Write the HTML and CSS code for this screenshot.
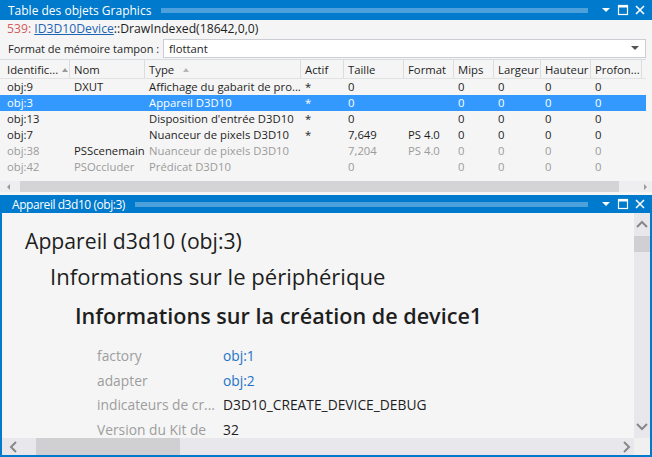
FILE: index.html
```html
<!DOCTYPE html>
<html lang="fr">
<head>
<meta charset="utf-8">
<title>Table des objets Graphics</title>
<link rel="stylesheet" href="styles.css">
</head>
<body>
<div class="app">
  <section class="pane pane-top">
    <header class="titlebar">
      <span class="title">Table des objets Graphics</span>
      <span class="grip"></span>
      <span class="tb-icons">
        <svg class="ic" width="12" height="12" viewBox="0 0 12 12"><polygon points="2,4 10,4 6,8" fill="#fff"/></svg>
        <svg class="ic" width="12" height="12" viewBox="0 0 12 12"><rect x="1.5" y="1.5" width="9" height="9" fill="none" stroke="#fff" stroke-width="1.2"/><rect x="1.5" y="1.5" width="9" height="2" fill="#fff"/></svg>
        <svg class="ic" width="12" height="12" viewBox="0 0 12 12"><path d="M2 2 L10 10 M10 2 L2 10" stroke="#fff" stroke-width="1.6"/></svg>
      </span>
    </header>
    <div class="callrow"><span class="evt">539:</span> <a class="link" href="#">ID3D10Device</a>::DrawIndexed(18642,0,0)</div>
    <div class="formatrow">
      <span class="flabel">Format de mémoire tampon :</span>
      <div class="select"><span>flottant</span><svg width="10" height="6" viewBox="0 0 10 6"><polygon points="1,1 9,1 5,5" fill="#555"/></svg></div>
    </div>
    <div class="grid">
      <div class="row head">
        <div class="c c1">Identific...<i class="sort"></i></div>
        <div class="c c2">Nom</div>
        <div class="c c3">Type<i class="sort sort-t"></i></div>
        <div class="c c4">Actif</div>
        <div class="c c5">Taille</div>
        <div class="c c6">Format</div>
        <div class="c c7">Mips</div>
        <div class="c c8">Largeur</div>
        <div class="c c9">Hauteur</div>
        <div class="c c10">Profon...</div>
      </div>
      <div class="row">
        <div class="c c1">obj:9</div><div class="c c2">DXUT</div><div class="c c3">Affichage du gabarit de pro...</div><div class="c c4">*</div><div class="c c5">0</div><div class="c c6"></div><div class="c c7">0</div><div class="c c8">0</div><div class="c c9">0</div><div class="c c10">0</div>
      </div>
      <div class="row sel">
        <div class="c c1">obj:3</div><div class="c c2"></div><div class="c c3">Appareil D3D10</div><div class="c c4">*</div><div class="c c5">0</div><div class="c c6"></div><div class="c c7">0</div><div class="c c8">0</div><div class="c c9">0</div><div class="c c10">0</div>
      </div>
      <div class="row">
        <div class="c c1">obj:13</div><div class="c c2"></div><div class="c c3">Disposition d'entrée D3D10</div><div class="c c4">*</div><div class="c c5">0</div><div class="c c6"></div><div class="c c7">0</div><div class="c c8">0</div><div class="c c9">0</div><div class="c c10">0</div>
      </div>
      <div class="row">
        <div class="c c1">obj:7</div><div class="c c2"></div><div class="c c3">Nuanceur de pixels D3D10</div><div class="c c4">*</div><div class="c c5">7,649</div><div class="c c6">PS 4.0</div><div class="c c7">0</div><div class="c c8">0</div><div class="c c9">0</div><div class="c c10">0</div>
      </div>
      <div class="row dim">
        <div class="c c1">obj:38</div><div class="c c2 strong">PSScenemain</div><div class="c c3">Nuanceur de pixels D3D10</div><div class="c c4"></div><div class="c c5">7,204</div><div class="c c6">PS 4.0</div><div class="c c7">0</div><div class="c c8">0</div><div class="c c9">0</div><div class="c c10">0</div>
      </div>
      <div class="row dim">
        <div class="c c1">obj:42</div><div class="c c2">PSOccluder</div><div class="c c3">Prédicat D3D10</div><div class="c c4"></div><div class="c c5">0</div><div class="c c6"></div><div class="c c7">0</div><div class="c c8">0</div><div class="c c9">0</div><div class="c c10">0</div>
      </div>
    </div>
    <div class="hscroll">
      <svg class="arr" width="10" height="10" viewBox="0 0 10 10"><polygon points="6,2 6,8 3,5" fill="#999"/></svg>
      <div class="thumb-h"></div>
      <div class="track-rest"></div>
      <svg class="arr" width="10" height="10" viewBox="0 0 10 10"><polygon points="4,2 4,8 7,5" fill="#999"/></svg>
    </div>
  </section>

  <section class="pane pane-bottom">
    <header class="titlebar">
      <span class="title">Appareil d3d10 (obj:3)</span>
      <span class="grip"></span>
      <span class="tb-icons">
        <svg class="ic" width="12" height="12" viewBox="0 0 12 12"><polygon points="2,4 10,4 6,8" fill="#fff"/></svg>
        <svg class="ic" width="12" height="12" viewBox="0 0 12 12"><rect x="1.5" y="1.5" width="9" height="9" fill="none" stroke="#fff" stroke-width="1.2"/><rect x="1.5" y="1.5" width="9" height="2" fill="#fff"/></svg>
        <svg class="ic" width="12" height="12" viewBox="0 0 12 12"><path d="M2 2 L10 10 M10 2 L2 10" stroke="#fff" stroke-width="1.6"/></svg>
      </span>
    </header>
    <div class="body">
      <div class="content">
        <h1 class="h1">Appareil d3d10 (obj:3)</h1>
        <h2 class="h2">Informations sur le périphérique</h2>
        <h3 class="h3">Informations sur la création de device1</h3>
        <div class="props">
          <div class="prop"><span class="pk">factory</span><a class="pv link2" href="#">obj:1</a></div>
          <div class="prop"><span class="pk">adapter</span><a class="pv link2" href="#">obj:2</a></div>
          <div class="prop"><span class="pk">indicateurs de cr...</span><span class="pv">D3D10_CREATE_DEVICE_DEBUG</span></div>
          <div class="prop"><span class="pk">Version du Kit de</span><span class="pv">32</span></div>
        </div>
      </div>
      <div class="vscroll">
        <svg width="16" height="16" viewBox="0 0 16 16"><polyline points="3,10 8,5 13,10" fill="none" stroke="#888" stroke-width="2"/></svg>
        <div class="thumb-v"></div>
        <div class="vrest"></div>
        <svg width="16" height="16" viewBox="0 0 16 16"><polyline points="3,6 8,11 13,6" fill="none" stroke="#888" stroke-width="2"/></svg>
      </div>
    </div>
    <div class="hscroll2">
      <svg width="16" height="16" viewBox="0 0 16 16"><polyline points="10,3 5,8 10,13" fill="none" stroke="#888" stroke-width="2"/></svg>
      <div class="thumb-h2"></div>
      <div class="h2rest"></div>
      <svg width="16" height="16" viewBox="0 0 16 16"><polyline points="6,3 11,8 6,13" fill="none" stroke="#888" stroke-width="2"/></svg>
      <div class="corner"></div>
    </div>
  </section>
</div>
</body>
</html>
```

FILE: styles.css
```css
* { box-sizing: border-box; }
html, body { margin: 0; padding: 0; }
body {
  width: 652px;
  height: 457px;
  overflow: hidden;
  background: #f5f5f5;
  font-family: "Open Sans", "Noto Sans", sans-serif;
  font-size: 11.3px;
  color: #1e1e1e;
}
.app { display: flex; flex-direction: column; height: 457px; }

.titlebar {
  display: flex;
  align-items: center;
  background: #007acc;
  color: #fff;
  height: 20px;
  padding: 0 6px 0 8px;
  font-size: 12px;
}
.title { white-space: nowrap; }
.grip {
  flex: 1;
  height: 5px;
  margin: 0 12px 0 10px;
  background-image: radial-gradient(circle, #4fa3dd 0.7px, transparent 0.9px);
  background-size: 2px 2px;
}
.tb-icons { display: flex; gap: 5px; align-items: center; }
.ic { display: block; }

.pane-top { display: flex; flex-direction: column; }
.callrow {
  height: 17px;
  line-height: 17px;
  padding-left: 7px;
  white-space: nowrap;
  font-size: 12.2px;
}
.evt { color: #d15b5b; }
.link { color: #1e64b4; text-decoration: underline; }
.formatrow {
  display: flex;
  align-items: center;
  height: 22px;
  padding: 0 6px 0 8px;
  font-size: 11px;
}
.flabel { width: 155px; white-space: nowrap; }
.select {
  flex: 1;
  height: 19px;
  background: #fff;
  border: 1px solid #ccced3;
  display: flex;
  align-items: center;
  justify-content: space-between;
  padding: 0 5px 0 5px;
  font-size: 11.3px;
}

.grid { width: 646px; border-top: 1px solid #d8dde2; }
.row { display: flex; height: 16px; line-height: 16px; white-space: nowrap; }
.row.head { height: 19px; line-height: 19px; border-bottom: 1px solid #e2e2e2; }
.row.head .c { border-right: 1px solid #dcdcdc; }
.c { padding-left: 4px; overflow: hidden; flex: none; }
.c1 { width: 70px; padding-left: 7px; }
.c2 { width: 75px; }
.c3 { width: 156px; }
.c4 { width: 43px; }
.c5 { width: 60px; }
.c6 { width: 50px; }
.c7 { width: 40px; }
.c8 { width: 47px; }
.c9 { width: 50px; }
.c10 { width: 51px; }
.sort {
  display: inline-block;
  width: 0; height: 0;
  border-left: 3px solid transparent;
  border-right: 3px solid transparent;
  border-bottom: 4px solid #9a9a9a;
  margin-left: 4px;
  vertical-align: 2px;
}
.sort-t { margin-left: 9px; border-bottom-color: #b5b5b5; }
.row.sel { background: #3399ff; color: #fff; }
.row.dim { color: #9b9b9b; }
.row.dim .strong { color: #1e1e1e; }

.hscroll {
  display: flex;
  align-items: center;
  height: 11px;
  margin-top: 6px;
  padding: 0 2px 0 4px;
  background: #eeeef1;
}
.arr { flex: none; }
.thumb-h { width: 599px; height: 11px; background: #d4d4d6; margin-left: 6px; }
.track-rest { flex: 1; }

.pane-bottom {
  margin-top: 3px;
  flex: 1;
  display: flex;
  flex-direction: column;
  border: 2px solid #007acc;
  border-top: none;
  min-height: 0;
}
.pane-bottom .titlebar { height: 18px; padding-left: 10px; padding-right: 4px; }
.pane-bottom .title { letter-spacing: -0.45px; }
.body { flex: 1; display: flex; min-height: 0; }
.content { flex: 1; padding: 15px 0 0 23px; overflow: hidden; white-space: nowrap; }
.h1 { margin: 0; font-weight: 400; font-size: 21.2px; line-height: 26px; }
.h2 { margin: 9px 0 0 25px; font-weight: 400; font-size: 22.1px; line-height: 26px; }
.h3 { margin: 14px 0 0 50px; font-weight: 600; font-size: 21.6px; line-height: 26px; }
.props { margin: 14px 0 0 72px; font-size: 13.8px; }
.prop { display: flex; height: 24.7px; align-items: center; }
.pk { width: 126px; color: #9d9d9d; overflow: hidden; }
.pv { color: #1e1e1e; }
.link2 { color: #1e73c8; text-decoration: none; }

.vscroll {
  width: 16px;
  display: flex;
  flex-direction: column;
  background: #e8e8ec;
  padding: 4px 0 4px;
}
.vscroll svg { flex: none; display: block; }
.thumb-v { height: 16px; background: #d0d0d3; margin-top: 3px; }
.vrest { flex: 1; }

.hscroll2 {
  display: flex;
  align-items: center;
  height: 17px;
  background: #e8e8ec;
  padding-left: 4px;
}
.hscroll2 svg { flex: none; display: block; }
.thumb-h2 { width: 144px; height: 17px; background: #d0d0d3; margin-left: 14px; }
.h2rest { flex: 1; }
.corner { width: 16px; height: 17px; background: #f0f0f0; }
```
